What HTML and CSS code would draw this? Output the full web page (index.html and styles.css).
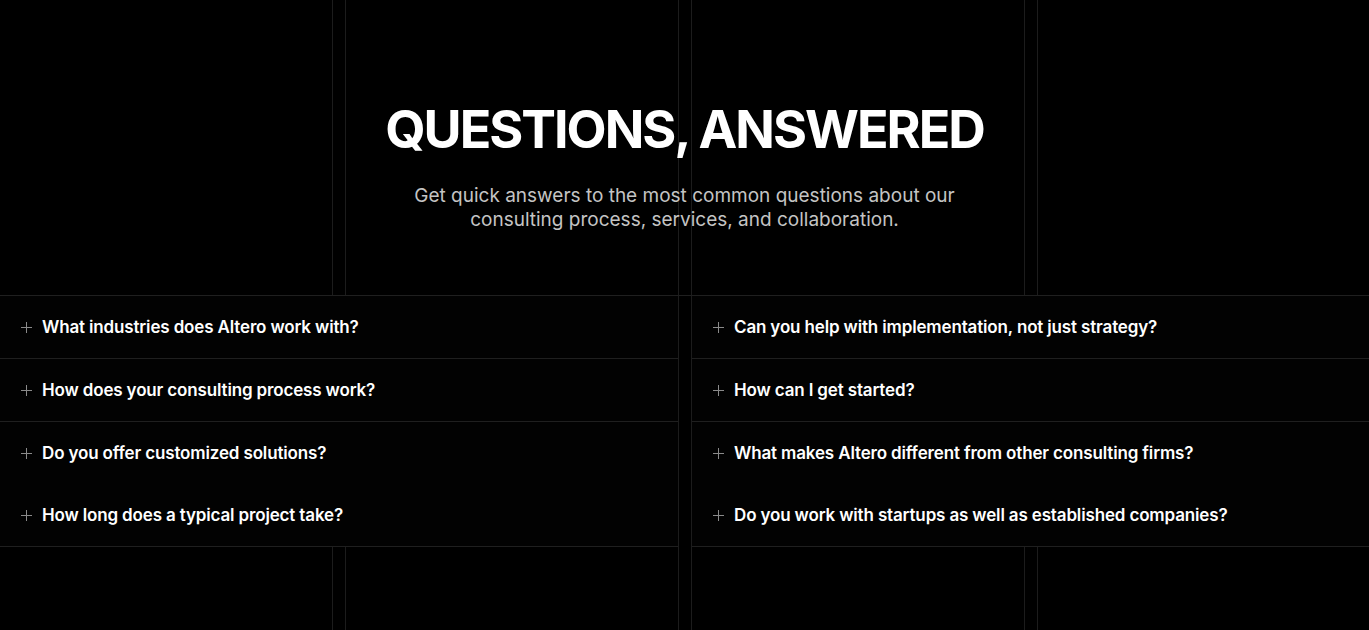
FILE: index.html
```html
<!DOCTYPE html>
<html lang="en">
<head>
<meta charset="utf-8">
<title>Questions, Answered</title>
<link rel="stylesheet" href="styles.css">
</head>
<body>
<section class="faq-section">
  <div class="grid-lines" aria-hidden="true">
    <div class="gl"></div><div class="gl"></div><div class="gl"></div><div class="gl"></div>
  </div>
  <header class="head">
    <h1 class="title">QUESTIONS, ANSWERED</h1>
    <p class="lead">Get quick answers to the most common questions about our<br>consulting process, services, and collaboration.</p>
  </header>
  <div class="faq">
    <div class="col col-left">
      <div class="item"><span class="plus"></span><span class="q">What industries does Altero work with?</span></div>
      <div class="item"><span class="plus"></span><span class="q">How does your consulting process work?</span></div>
      <div class="item no-line"><span class="plus"></span><span class="q">Do you offer customized solutions?</span></div>
      <div class="item"><span class="plus"></span><span class="q">How long does a typical project take?</span></div>
    </div>
    <div class="col col-right">
      <div class="item"><span class="plus"></span><span class="q">Can you help with implementation, not just strategy?</span></div>
      <div class="item"><span class="plus"></span><span class="q">How can I get started?</span></div>
      <div class="item no-line"><span class="plus"></span><span class="q">What makes Altero different from other consulting firms?</span></div>
      <div class="item"><span class="plus"></span><span class="q">Do you work with startups as well as established companies?</span></div>
    </div>
  </div>
</section>
</body>
</html>
```

FILE: styles.css
```css
html, body {
  margin: 0;
  padding: 0;
  background: #000;
}
body {
  font-family: Inter, "Noto Sans", sans-serif;
  color: #fff;
  height: 630px;
  overflow: hidden;
}
.faq-section {
  position: relative;
  min-height: 630px;
}
.grid-lines {
  position: absolute;
  inset: 0;
  display: grid;
  grid-template-columns: 333px 334px 334px 1fr;
  column-gap: 12px;
  z-index: 0;
  pointer-events: none;
}
.gl {
  border-left: 1px solid #1c1c1c;
  border-right: 1px solid #1c1c1c;
}
.gl:first-child { border-left: none; }
.gl:last-child { border-right: none; }

.head {
  position: relative;
  z-index: 1;
  text-align: center;
  padding-top: 98px;
  height: 295px;
  box-sizing: border-box;
}
.title {
  margin: 0;
  font-size: 52px;
  font-weight: 700;
  letter-spacing: -2px;
  line-height: 64px;
}
.lead {
  margin: 22px 0 0;
  font-size: 19px;
  line-height: 24px;
  color: #c4c4c4;
  letter-spacing: 0;
}

.faq {
  position: relative;
  z-index: 1;
  display: grid;
  grid-template-columns: 679px 1fr;
  column-gap: 12px;
  border-top: 1px solid #1f1f1f;
}
.col {
  background: #020202;
  display: flex;
  flex-direction: column;
}
.col-left { border-right: 1px solid #1c1c1c; }
.col-right { border-left: 1px solid #1c1c1c; }
.item {
  height: 62px;
  display: flex;
  align-items: center;
  gap: 10px;
  padding-left: 21px;
  border-bottom: 1px solid #1f1f1f;
}
.item.no-line { border-bottom: none; }
.plus {
  position: relative;
  width: 11px;
  height: 11px;
  flex: none;
}
.plus::before, .plus::after {
  content: "";
  position: absolute;
  background: #8a8a8a;
}
.plus::before { left: 0; right: 0; top: 5px; height: 1px; }
.plus::after { top: 0; bottom: 0; left: 5px; width: 1px; }
.q {
  font-size: 17px;
  font-weight: 600;
  letter-spacing: -0.15px;
  color: #fff;
}
```
